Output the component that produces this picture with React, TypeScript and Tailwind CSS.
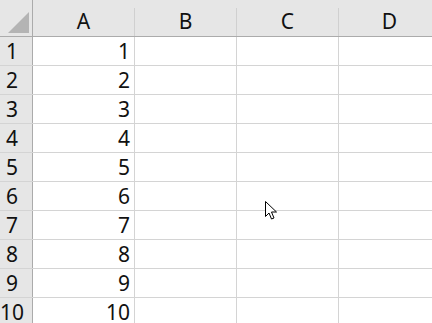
import React from "react";

const columns = ["A", "B", "C", "D"];
const rows = Array.from({ length: 10 }, (_, i) => i + 1);

function Cursor() {
  return (
    <svg
      className="absolute left-[265px] top-[201px]"
      width="13"
      height="20"
      viewBox="0 0 13 20"
    >
      <path
        d="M0.5 0.5 L0.5 15.5 L4 12 L6.5 18 L9 17 L6.5 11 L11.5 11 Z"
        fill="#fff"
        stroke="#000"
        strokeWidth="1"
        strokeLinejoin="miter"
      />
    </svg>
  );
}

export default function App() {
  return (
    <div
      className="relative h-[323px] w-[432px] overflow-hidden bg-white text-[#111]"
      style={{ fontFamily: '"Noto Sans", "Open Sans", sans-serif' }}
    >
      {/* header row */}
      <div className="flex h-[37px] border-b border-[#ababab] bg-[#e6e6e6]">
        <div className="relative w-[33px] shrink-0 border-r border-[#ababab]">
          <svg
            className="absolute left-[8px] top-[12px]"
            width="21"
            height="21"
            viewBox="0 0 21 21"
          >
            <path d="M21 0 L21 21 L0 21 Z" fill="#b4b4b4" />
          </svg>
        </div>
        {columns.map((c) => (
          <div key={c} className="flex w-[102px] shrink-0 flex-col">
            <div className="h-[8px]" />
            <div className="flex flex-1 items-center justify-center border-r border-[#d0d0d0] pb-[1px] text-[21px] leading-none">
              {c}
            </div>
          </div>
        ))}
      </div>

      {rows.map((r) => (
        <div key={r} className="flex h-[29px] border-b border-[#d4d4d4]">
          <div className="flex w-[33px] shrink-0 items-end justify-center border-r border-[#ababab] bg-[#e6e6e6] pr-[8px] text-[21px] leading-none">
            <span className="pb-[3px]">{r}</span>
          </div>
          {columns.map((c) => (
            <div
              key={c}
              className="flex w-[102px] shrink-0 items-end justify-end border-r border-[#d4d4d4] pr-[4px] text-[21px] leading-none"
            >
              {c === "A" && <span className="pb-[3px]">{r}</span>}
            </div>
          ))}
        </div>
      ))}

      <Cursor />
    </div>
  );
}
